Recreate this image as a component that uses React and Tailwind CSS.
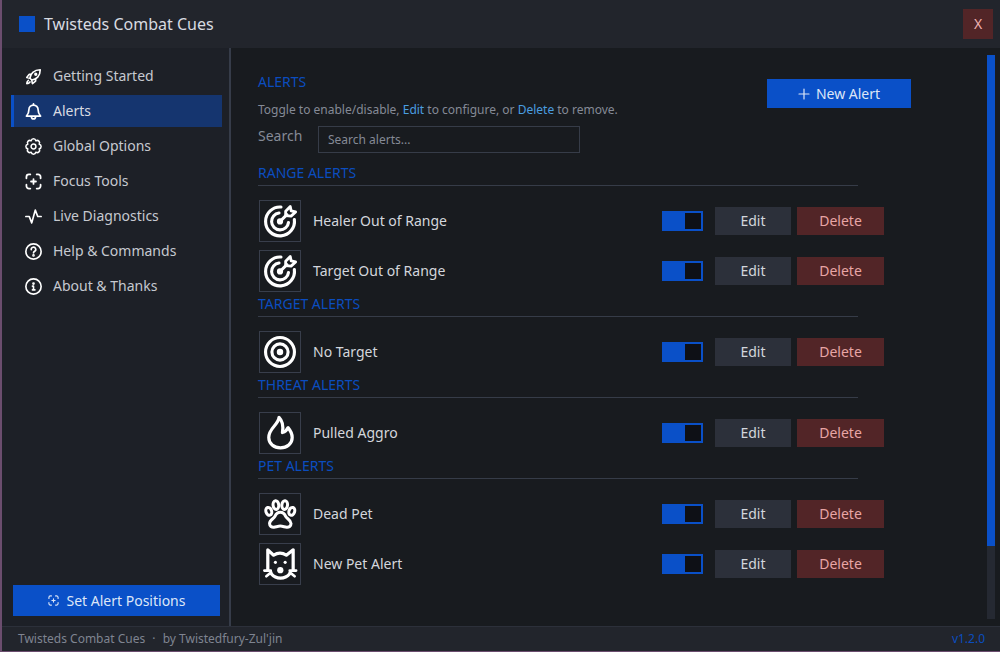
import React, { useState } from "react";

const stroke = {
  fill: "none",
  stroke: "currentColor",
  strokeLinecap: "round",
  strokeLinejoin: "round",
  "aria-hidden": true,
};

/* Sidebar icons, 24px grid */
const RocketIcon = () => (
  <svg viewBox="0 0 24 24" className="size-[17px] shrink-0" strokeWidth="2.3" {...stroke}>
    <path d="M9.5 17 7 14.500C7.500 8.500 12.500 2.500 21.500 2.500 21.500 11.500 16 16.500 9.500 17Z" />
    <path d="M8.500 9H5.800L2.500 13.500l4.500 1M15 15.500v3L10.500 22l-1-5" />
    <path d="M4.800 17.500c-1.500 1-2.300 2.500-2.300 4.500 2 0 3.500-.8 4.500-2.300" />
    <circle cx="15.200" cy="8.800" r="1.200" fill="currentColor" />
  </svg>
);

const BellIcon = () => (
  <svg viewBox="0 0 24 24" className="size-[17px] shrink-0" strokeWidth="2.4" {...stroke}>
    <path d="M12 3a6.500 6.500 0 0 0-6.500 6.500c0 5-1.500 6.500-3.500 9h20c-2-2.500-3.500-4-3.500-9A6.500 6.500 0 0 0 12 3Z" />
    <path d="M12 1.200V3M9 19.500c.3 2 1.500 3 3 3s2.700-1 3-3" />
  </svg>
);

const GearIcon = () => (
  <svg viewBox="0 0 24 24" className="size-[17px] shrink-0" strokeWidth="2.1" {...stroke}>
    <path d="M8.700 4C9.500 .3 14.500 .3 15.300 4 18.500 2 22 5.500 20 8.700 23.700 9.500 23.700 14.500 20 15.300 22 18.500 18.500 22 15.300 20 14.500 23.700 9.500 23.700 8.700 20 5.500 22 2 18.500 4 15.300 .3 14.500 .3 9.500 4 8.700 2 5.500 5.500 2 8.700 4Z" />
    <circle cx="12" cy="12" r="3.400" />
  </svg>
);

const FocusIcon = ({ className = "size-[17px] shrink-0" }) => (
  <svg viewBox="0 0 24 24" className={className} strokeWidth="2.5" {...stroke}>
    <path d="M2 7.500v-2a3.500 3.500 0 0 1 3.500-3.500h2M16.500 2h2a3.500 3.500 0 0 1 3.500 3.500v2M22 16.500v2a3.500 3.500 0 0 1-3.500 3.500h-2M7.500 22h-2A3.500 3.500 0 0 1 2 18.500v-2" />
    <path d="M12 8.500v7M8.500 12h7" />
  </svg>
);

const PulseIcon = () => (
  <svg viewBox="0 0 24 24" className="size-[17px] shrink-0" strokeWidth="2.4" {...stroke}>
    <path d="M1.200 12H6l3.500 9L14.500 3l3.500 9h4.800" />
  </svg>
);

const HelpIcon = () => (
  <svg viewBox="0 0 24 24" className="size-[17px] shrink-0" strokeWidth="2.3" {...stroke}>
    <circle cx="12" cy="12" r="10.800" />
    <path d="M8.800 9.300a3.200 3.200 0 1 1 4.900 2.400c-1 .7-1.700 1.200-1.700 2.300" />
    <circle cx="12" cy="17.500" r=".7" fill="currentColor" />
  </svg>
);

const InfoIcon = () => (
  <svg viewBox="0 0 24 24" className="size-[17px] shrink-0" strokeWidth="2.3" {...stroke}>
    <circle cx="12" cy="12" r="10.800" />
    <path d="M10.500 11.500H12v5M10.500 16.800h3.500" />
    <circle cx="12" cy="7.800" r=".8" fill="currentColor" />
  </svg>
);

/* Alert artwork, 41px grid */
const RangeArt = () => (
  <svg viewBox="0 0 41 41" className="size-full" strokeWidth="3.2" {...stroke}>
    <path d="M21.500 6.200A14.800 14.800 0 1 0 35.200 19" />
    <path d="M19.500 12.300A8.700 8.700 0 1 0 29.200 22" />
    <circle cx="20.500" cy="21" r="1.600" fill="currentColor" />
    <path d="m20.500 21 7-7" />
    <path d="M26.300 15V10.500l4.700-4.800 1 4.500 4.500 1-4.700 4.300Z" strokeWidth="2.900" />
  </svg>
);

const TargetArt = () => (
  <svg viewBox="0 0 41 41" className="size-full" strokeWidth="3.2" {...stroke}>
    <circle cx="20.500" cy="20.500" r="14.800" />
    <circle cx="20.500" cy="20.500" r="8.300" />
    <circle cx="20.500" cy="20.500" r="1.700" fill="currentColor" />
  </svg>
);

const FlameArt = () => (
  <svg viewBox="0 0 41 41" className="size-full" strokeWidth="3.3" {...stroke}>
    <path d="M19.500 4.500C19 12 9 15.500 9 25c0 6.500 5.300 10.700 12 10.700S33 31.500 33 25c0-4-1.800-7-4.300-10-1 2.500-2.700 4.200-5.700 5C24 14 23.500 8.500 19.500 4.500Z" />
  </svg>
);

const PawArt = () => (
  <svg viewBox="0 0 41 41" className="size-full" strokeWidth="3.100" {...stroke}>
    <ellipse cx="9" cy="17.800" rx="2.900" ry="4.100" transform="rotate(-18 9 17.800)" />
    <ellipse cx="16.300" cy="11.300" rx="2.900" ry="4.500" transform="rotate(-6 16.300 11.300)" />
    <ellipse cx="25.300" cy="11.300" rx="2.900" ry="4.500" transform="rotate(6 25.300 11.300)" />
    <ellipse cx="32.600" cy="17.800" rx="2.900" ry="4.100" transform="rotate(18 32.600 17.800)" />
    <path d="M20.800 18.700c-3.300 0-4.500 2-5.500 4.300-1 2.300-5.500 3.500-5.500 7.300 0 2.700 2.200 3.900 4.500 3.700 2-.2 4.300-1.100 6.500-1.100s4.500.9 6.500 1.100c2.300.2 4.500-1 4.500-3.700 0-3.800-4.500-5-5.500-7.300-1-2.300-2.200-4.300-5.500-4.300Z" />
  </svg>
);

const CatArt = () => (
  <svg viewBox="0 0 41 41" className="size-full" strokeWidth="3.3" {...stroke}>
    <path d="M8 27V6l6 5.500c4-2.500 9-2.500 13 0L34 6v21" />
    <path d="M11.500 30.500c5 6 14 6 19 0" />
    <path d="M4.500 27.200h6.500M6.500 33l5-4M37 27.200h-6.500M35.500 33l-5-4" strokeWidth="2.800" />
    <circle cx="15.800" cy="18.800" r="1.600" fill="currentColor" stroke="none" />
    <circle cx="25.800" cy="18.800" r="1.600" fill="currentColor" stroke="none" />
    <circle cx="20.800" cy="26.800" r="3.200" fill="currentColor" stroke="none" />
  </svg>
);

const navItems = [
  { name: "Getting Started", icon: <RocketIcon /> },
  { name: "Alerts", icon: <BellIcon /> },
  { name: "Global Options", icon: <GearIcon /> },
  { name: "Focus Tools", icon: <FocusIcon /> },
  { name: "Live Diagnostics", icon: <PulseIcon /> },
  { name: "Help & Commands", icon: <HelpIcon /> },
  { name: "About & Thanks", icon: <InfoIcon /> },
];

const alertSections = {
  "RANGE ALERTS": [
    { name: "Healer Out of Range", art: <RangeArt /> },
    { name: "Target Out of Range", art: <RangeArt /> },
  ],
  "TARGET ALERTS": [{ name: "No Target", art: <TargetArt /> }],
  "THREAT ALERTS": [{ name: "Pulled Aggro", art: <FlameArt /> }],
  "PET ALERTS": [
    { name: "Dead Pet", art: <PawArt /> },
    { name: "New Pet Alert", art: <CatArt /> },
  ],
};

function AlertRow({ name, art }) {
  const [enabled, setEnabled] = useState(true);

  return (
    <li className="flex h-[50px] items-center pr-[27px]">
      <div className="ml-px size-[42px] shrink-0 border border-[#383e4b] text-white">{art}</div>
      <span className="ml-3 flex-1 text-sm text-[#d3d6dc]">{name}</span>
      <input
        type="checkbox"
        aria-label={"Enable " + name}
        checked={enabled}
        onChange={() => setEnabled(!enabled)}
        className="mr-3 flex h-5 w-[41px] shrink-0 appearance-none items-center bg-[#2c303a] p-0.5 before:size-4 before:bg-[#0e1016] checked:justify-end checked:bg-[#0a50c8]"
      />
      <button className="mr-1.5 h-7 w-[76px] shrink-0 bg-[#2c303a] text-sm text-[#d3d6dc]">Edit</button>
      <button className="h-7 w-[87px] shrink-0 bg-[#522527] text-sm text-[#e8a5a5]">Delete</button>
    </li>
  );
}

export default function App() {
  const [active, setActive] = useState("Alerts");
  const [query, setQuery] = useState("");

  return (
    <div className="flex min-h-screen flex-col border-b border-l-2 border-[#6b4d6e] bg-[#181b1f] font-['Noto_Sans',sans-serif]">
      {/* Title bar */}
      <header className="flex h-12 items-center bg-[#22252c] pr-[7px] pl-[17px]">
        <div className="size-4 bg-[#0a50c8]"></div>
        <h1 className="ml-[9px] flex-1 text-base text-[#d8dbe1]">Twisteds Combat Cues</h1>
        <button className="size-[30px] bg-[#522527] text-sm text-[#f0b0b0]" aria-label="Close">X</button>
      </header>

      <div className="flex flex-1">
        {/* Sidebar */}
        <aside className="flex w-[229px] shrink-0 flex-col justify-between border-r-2 border-[#363c49] bg-[#1d2027] pt-3 pb-2.5">
          <nav className="flex flex-col gap-[3px] pr-[7px] pl-[9px]">
            {navItems.map((item) => (
              <a
                key={item.name}
                href="#"
                onClick={() => setActive(item.name)}
                className={
                  active === item.name
                    ? "flex h-8 items-center gap-[11px] border-l-3 border-[#0a50c8] bg-[#15356f] pl-[11px] text-sm text-[#d8dbe1]"
                    : "flex h-8 items-center gap-[11px] border-l-3 border-transparent pl-[11px] text-sm text-[#c6c9d0]"
                }
              >
                <span className="text-white">{item.icon}</span>
                {item.name}
              </a>
            ))}
          </nav>
          <button className="mr-[9px] ml-[11px] flex h-[31px] items-center justify-center gap-2 bg-[#0a50c8] text-sm text-[#dde6f7]">
            <FocusIcon className="size-[11px] shrink-0" />
            Set Alert Positions
          </button>
        </aside>

        {/* Alerts page */}
        <main className="flex flex-1 pr-[5px]">
          <div className="flex-1 pt-6 pr-[76px] pl-[27px]">
            <div className="flex items-start justify-between">
              <div>
                <h2 className="text-sm text-[#0b4dbf]">ALERTS</h2>
                <p className="mt-2.5 text-xs text-[#858a96]">
                  Toggle to enable/disable, <span className="text-[#4a9ee0]">Edit</span> to configure, or{" "}
                  <span className="text-[#4a9ee0]">Delete</span> to remove.
                </p>
              </div>
              <button className="mt-[7px] flex h-[29px] w-36 items-center justify-center gap-1.5 bg-[#0a50c8] text-sm text-[#dde6f7]">
                <svg viewBox="0 0 12 12" className="size-3" strokeWidth="1.2" {...stroke}>
                  <path d="M6 1v10M1 6h10" />
                </svg>
                New Alert
              </button>
            </div>

            <div className="mt-2 flex items-start">
              <label htmlFor="search" className="w-[60px] text-sm text-[#858a96]">Search</label>
              <input
                id="search"
                type="text"
                value={query}
                onChange={(e) => setQuery(e.target.value)}
                placeholder="Search alerts..."
                className="h-[27px] w-[262px] border border-[#363c48] bg-[#181b1f] px-[9px] text-xs text-[#d3d6dc] placeholder:text-[#858a96]"
              />
            </div>

            <div className="mt-3">
              {Object.entries(alertSections).map(([section, alerts]) => (
                <section key={section}>
                  <h3 className="mr-[53px] mb-2.5 border-b border-[#363c48] pb-1 text-sm leading-4 text-[#0b4dbf]">
                    {section}
                  </h3>
                  <ul>
                    {alerts
                      .filter((a) => a.name.toLowerCase().includes(query.toLowerCase()))
                      .map((a) => (
                        <AlertRow key={a.name} name={a.name} art={a.art} />
                      ))}
                  </ul>
                </section>
              ))}
            </div>
          </div>

          {/* Scroll track */}
          <div className="my-[7px] w-2 bg-[#252932]">
            <div className="h-[87%] bg-[#0a50c8]"></div>
          </div>
        </main>
      </div>

      {/* Footer */}
      <footer className="flex h-[25px] items-center justify-between border-t border-[#2c303a] bg-[#22252c] pr-[15px] pl-4 text-xs text-[#7f8491]">
        <p>
          Twisteds Combat Cues <span className="mx-1">·</span> by Twistedfury-Zul'jin
        </p>
        <span className="text-[#0b4dbf]">v1.2.0</span>
      </footer>
    </div>
  );
}
